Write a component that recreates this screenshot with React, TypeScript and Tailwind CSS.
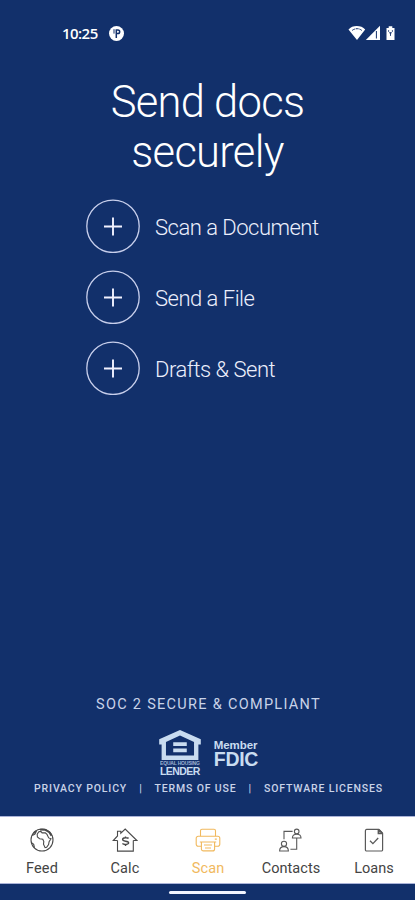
import React from "react";

const actions = ["Scan a Document", "Send a File", "Drafts & Sent"];

function StatusBar() {
  return (
    <div className="flex h-[66px] items-center justify-between pr-[18px] pl-[62px] text-white">
      <div className="flex items-center gap-[10px]">
        <span className="w-[37px] font-['Open_Sans',sans-serif] text-[15px] leading-none font-semibold tracking-[-0.55px] whitespace-nowrap">10:25</span>
        <svg width="15" height="15" viewBox="0 0 15 15">
          <circle cx="7.5" cy="7.5" r="7.5" fill="#fff" />
          <path d="M5 3.2v4.4" stroke="#12306b" strokeWidth="1" />
          <path d="M7.3 12V4h1.6a1.8 1.8 0 0 1 0 3.6H7.3" fill="none" stroke="#12306b" strokeWidth="1.5" />
        </svg>
      </div>
      <svg width="50" height="18" viewBox="0 0 50 18">
        <path d="M1.5 5.4C5.3.8 14.2.8 18.2 5.4L10 16Z" fill="#fff" />
        <path d="M5.2 6.4c3-2.3 6.8-2.3 9.6 0" fill="none" stroke="#12306b" strokeWidth="1" strokeDasharray="3 .8" />
        <path d="M18.8 16 33 1.7V16Z" fill="#fff" />
        <path d="M29.4 7v7.5" stroke="#12306b" strokeWidth="1" />
        <path d="M39.5 4h2.2V2.2h3.6V4h2.2v12h-8Z" fill="#fff" />
        <path d="M41.6 6.2v1.6M45.4 6.2v1.6M43.5 8.5v3.4M42.1 8.8h2.8" stroke="#12306b" strokeWidth=".9" />
      </svg>
    </div>
  );
}

function LenderLogo() {
  return (
    <div className="flex w-[42px] flex-col items-center text-[#c9dcf0]">
      <svg width="42" height="30" viewBox="0 0 43 31" fill="currentColor" className="block">
        <path fillRule="evenodd" d="M21.5 0 43 9.5V15h-2.5v16h-38V15H0V9.5ZM21.5 5.6 7 12.4v14h29v-14Z" />
        <path d="M14.5 12.6h14v3.9h-14zM14.5 19h14v3.9h-14z" />
      </svg>
      <span className="mt-px h-[5px] font-['Liberation_Sans',sans-serif] text-[5px] leading-[5px] font-bold tracking-[-0.2px] whitespace-nowrap opacity-75">EQUAL HOUSING</span>
      <span className="h-[10px] font-['Liberation_Sans',sans-serif] text-[10.5px] leading-[10px] font-bold tracking-[-0.6px]">LENDER</span>
    </div>
  );
}

function FeedIcon() {
  return (
    <svg width="26" height="26" viewBox="0 0 26 26" fill="none" stroke="#4a4a4a" strokeWidth="1.1">
      <circle cx="13" cy="13" r="11" />
      <path d="M9.8 4.8 8.2 7.2l.2 2.8 2.2 1.8 3.2.5 1 2.2-.3 2.7 1.6 3.5 1.5-.4 2-2.8.5-2.8 1.9-3-2.3-.8L18 7.4l-1.7-1.6-3.2.1-1.2-1.5Z" />
      <path d="M3.2 8.6 6 7l1.4-3M2.2 15.5l2.5 1.8.8 3.6" />
      <path d="M4.8 6.1 7 4M11 2.6l5 .1 4.3 2.6 2.2 3.4" strokeWidth="1.9" />
    </svg>
  );
}

function CalcIcon() {
  return (
    <svg width="26" height="26" viewBox="0 0 26 26" fill="none" stroke="#4a4a4a" strokeWidth="1.1">
      <path d="M5.5 13.5v10.6h15.8V13.5M5.5 13.5H1.3L5.5 9V4.2h3.3v2L13.2 2l11.7 11.5h-3.6" />
      <path d="M16.6 11.4c-1.2-1-6-1-6 1.2 0 2.4 6 .8 6 3.2 0 2-4.8 2.1-6.2.8M13.5 9.4v1.4M13.5 17.4v1.6" strokeWidth="1.4" />
    </svg>
  );
}

function ScanIcon() {
  return (
    <svg width="26" height="26" viewBox="0 0 26 26" fill="none" stroke="#f1b95e" strokeWidth="1.1">
      <path d="M5.5 9.3V3.8A1.5 1.5 0 0 1 7 2.3h12a1.5 1.5 0 0 1 1.5 1.5v5.5" />
      <path d="M6.3 19.2H3.2A2 2 0 0 1 1.2 17v-5.7a2 2 0 0 1 2-2h19.6a2 2 0 0 1 2 2V17a2 2 0 0 1-2 2.2h-3.1" />
      <path d="M4.8 15h16.4M6.4 15v6.9a2 2 0 0 0 2 2h9.2a2 2 0 0 0 2-2V15M9 18h8M10 21h6M19.8 12.1h2" />
    </svg>
  );
}

function ContactsIcon() {
  return (
    <svg width="26" height="26" viewBox="0 0 26 26" fill="none" stroke="#5a5a5a" strokeWidth="1.1">
      <circle cx="18.7" cy="4.4" r="2.3" />
      <path d="M14.4 11c0-2.5 1.4-3.8 4.3-3.8S23 8.5 23 11ZM1.6 24c0-3 1.4-4.4 4.4-4.4s4.4 1.4 4.4 4.4Z" />
      <circle cx="6" cy="16.8" r="2.6" />
      <path d="M14.6 4.4H6v7.8M12.4 22.2h6.3V11" />
    </svg>
  );
}

function LoansIcon() {
  return (
    <svg width="26" height="26" viewBox="0 0 26 26" fill="none" stroke="#5a5a5a" strokeWidth="1.2">
      <path d="M5.6 2.3h12.2l3.8 4v16.5a1.2 1.2 0 0 1-1.2 1.2H5.6a1.2 1.2 0 0 1-1.2-1.2v-19a1.5 1.5 0 0 1 1.2-1.5Z" />
      <path d="M17.4 2.5v3.9h4.2M18 2.8l3 3" strokeWidth="1.6" />
      <path d="m9 13.8 2.9 2.8 5.3-5.6" strokeWidth="1.3" />
    </svg>
  );
}

const tabs = [
  { label: "Feed", icon: <FeedIcon />, style: "text-[#444] tracking-[0.2px]" },
  { label: "Calc", icon: <CalcIcon />, style: "text-[#444] tracking-[0.1px]" },
  { label: "Scan", icon: <ScanIcon />, style: "text-[#f1b95e] tracking-[0.1px]" },
  { label: "Contacts", icon: <ContactsIcon />, style: "text-[#444] tracking-[0.05px]" },
  { label: "Loans", icon: <LoansIcon />, style: "text-[#444] tracking-[0.05px]" },
];

export default function App() {
  return (
    <div className="flex h-[900px] w-[415px] flex-col overflow-hidden bg-[#12306b] font-[Roboto,sans-serif]">
      <StatusBar />
      <h1 className="mt-[12px] text-center text-[43.5px] leading-[50px] font-light tracking-[-0.7px] text-white">
        Send docs<br />securely
      </h1>
      <div className="mt-[21px] ml-[86px] flex flex-col gap-[17px]">
        {actions.map((label) => (
          <button key={label} className="flex h-[54px] items-center gap-[15px] text-left">
            <svg width="54" height="54" viewBox="0 0 54 54" fill="none">
              <circle cx="27" cy="27.3" r="26.2" stroke="#c8cfec" strokeWidth="1.3" />
              <path d="M18 27.5h18M27 18.5v18" stroke="#f2f2ff" strokeWidth="1.9" />
            </svg>
            <span className="pt-[4px] text-[22px] leading-[26px] font-light tracking-[-0.5px] text-[#eceffc]">{label}</span>
          </button>
        ))}
      </div>
      <footer className="mt-auto flex flex-col items-center text-[#c9d3e8]">
        <p className="ml-[2px] text-[14.5px] leading-[18px] tracking-[1.3px] whitespace-nowrap">SOC 2 SECURE &amp; COMPLIANT</p>
        <div className="mt-[16px] ml-[2px] flex h-[48px] items-start gap-[13px]">
          <LenderLogo />
          <div className="flex flex-col pt-[9px] font-['Liberation_Sans',sans-serif] font-bold text-[#c9dcf0]">
            <span className="h-[11px] text-[11.5px] leading-[12px] tracking-[-0.1px]">Member</span>
            <span className="h-[20px] text-[19.5px] leading-[19px] tracking-[-0.3px]">FDIC</span>
          </div>
        </div>
        <div className="mt-[4px] ml-[2px] flex h-[14px] items-center gap-[12px] text-[10.5px] leading-[14px] font-medium tracking-[0.84px] whitespace-nowrap">
          <span>PRIVACY POLICY</span><span>|</span><span>TERMS OF USE</span><span>|</span><span>SOFTWARE LICENSES</span>
        </div>
      </footer>
      <nav className="mt-[20px] grid h-[68px] shrink-0 grid-cols-5 border-y border-[#aab3d8] bg-white">
        {tabs.map((tab) => (
          <div key={tab.label} className="flex flex-col items-center pt-[10px]">
            {tab.icon}
            <span className={`mt-[7px] pl-px text-[14.5px] leading-[18px] ${tab.style}`}>{tab.label}</span>
          </div>
        ))}
      </nav>
      <div className="flex h-[16px] shrink-0 justify-center pt-[7px]">
        <div className="h-[3px] w-[77px] rounded-full bg-[#f3f5ff]" />
      </div>
    </div>
  );
}
